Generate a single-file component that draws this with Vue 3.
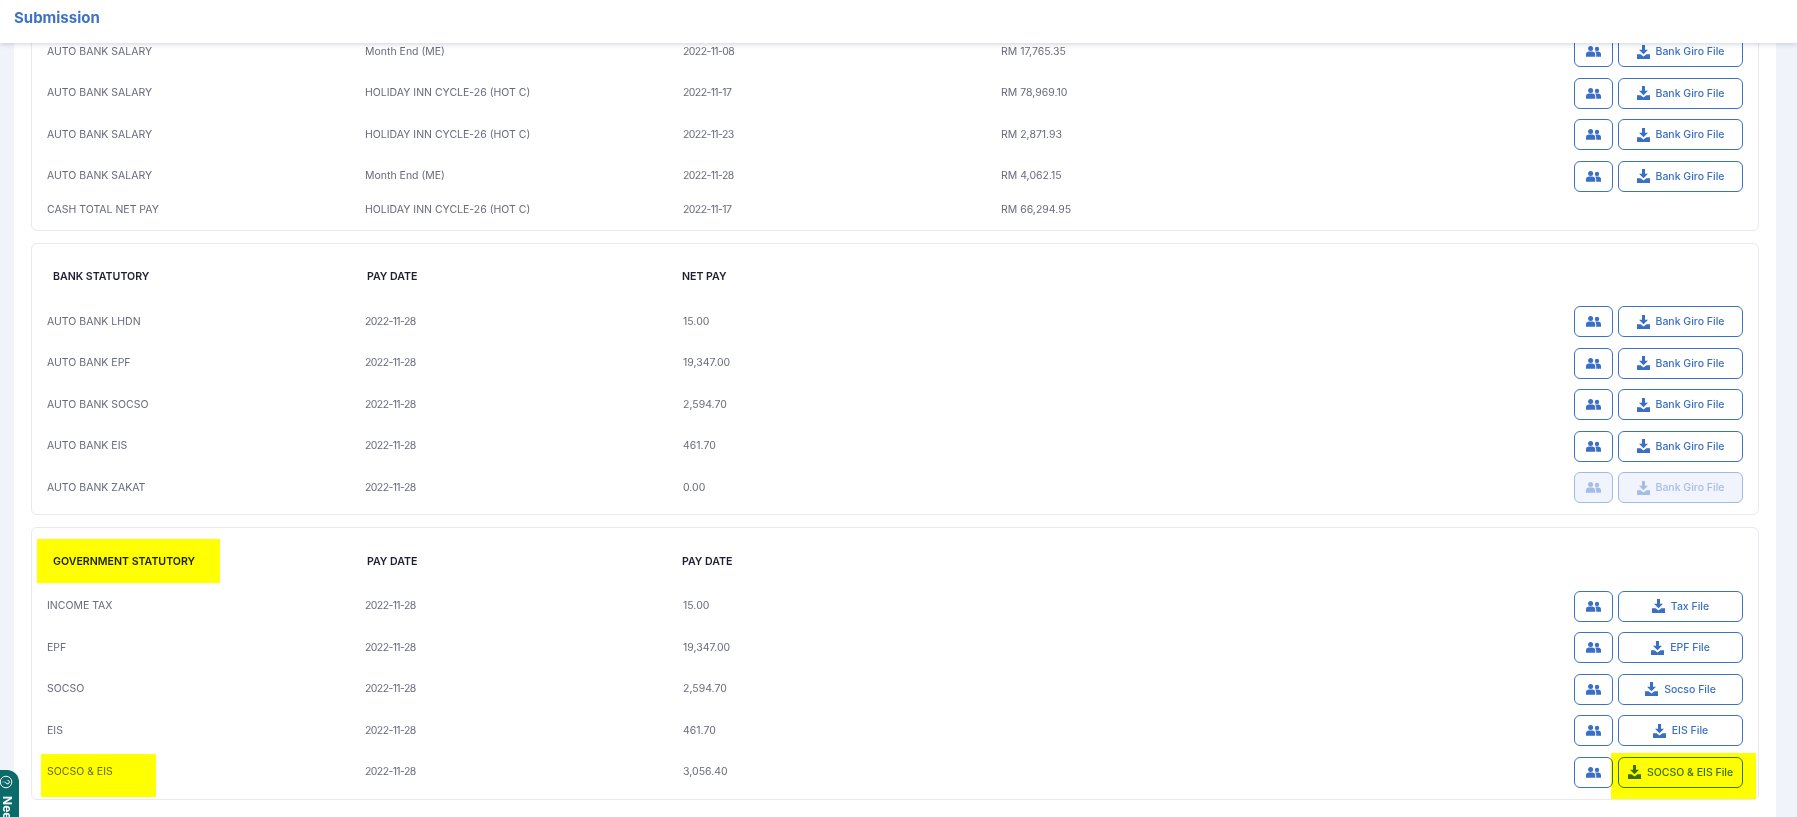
<template>
  <div class="page">
    <header class="topbar">Submission</header>

    <main class="content">
      <section v-for="section in sections" :key="section.id" class="card" :class="section.id">
        <div v-if="section.heading" class="head-row">
          <div class="head-cell">
            {{ section.heading }}
            <span v-if="section.marked" class="marker marker-head"></span>
          </div>
          <div class="head-cell">PAY DATE</div>
          <div class="head-cell">{{ section.amountHeading }}</div>
        </div>

        <div
          v-for="row in section.rows"
          :key="row.name + row.date + row.cycle"
          class="row"
          :class="{ short: row.noActions }"
        >
          <div class="cell">
            {{ row.name }}
            <span v-if="row.marked" class="marker marker-name"></span>
          </div>
          <div class="cell" :class="{ date: !row.cycle }">{{ row.cycle || row.date }}</div>
          <div class="cell" :class="{ date: row.cycle }">{{ row.cycle ? row.date : row.amount }}</div>
          <div class="cell">{{ row.cycle ? row.amount : '' }}</div>

          <div v-if="!row.noActions" class="actions">
            <button class="btn btn-icon" :disabled="row.disabled">
              <svg width="15" height="11" viewBox="0 0 15 11" fill="currentColor">
                <circle cx="4.6" cy="2.6" r="2.5" />
                <circle cx="11" cy="2.9" r="2.2" />
                <path d="M0 10.8V8.3C0 6.6 1.4 5.6 3 5.6h3.2c1.6 0 3 1 3 2.7v2.5z" />
                <path d="M10.2 10.8V8.2c0-1-.4-1.8-1-2.5.4-.1.8-.1 1.2-.1h1.5c1.7 0 3.1 1 3.1 2.6v2.6z" />
              </svg>
            </button>
            <button class="btn btn-file" :disabled="row.disabled">
              <svg width="13" height="14" viewBox="0 0 13 14" fill="currentColor">
                <path d="M5 0h3v4.8h3L6.5 9.3 2 4.8h3z" />
                <path d="M0 9.2h3.6l2.9 2.3 2.9-2.3H13V14H0z" />
              </svg>
              {{ row.file || 'Bank Giro File' }}
            </button>
            <span v-if="row.marked" class="marker marker-btn"></span>
          </div>
        </div>
      </section>
    </main>

    <div class="help-tab">
      <svg width="14" height="14" viewBox="0 0 14 14" fill="none" stroke="#fff" stroke-width="1">
        <circle cx="7" cy="7" r="5.8" />
        <path d="M5.3 5.5a1.8 1.8 0 1 1 2.7 1.5c-.7.4-1 .8-1 1.5M7 9.6v.8" transform="rotate(90 7 7)" />
      </svg>
      <span>Need Help</span>
    </div>
  </div>
</template>

<script setup>
const sections = [
  {
    id: 'salary',
    rows: [
      { name: 'AUTO BANK SALARY', cycle: 'Month End (ME)', date: '2022-11-08', amount: 'RM 17,765.35' },
      { name: 'AUTO BANK SALARY', cycle: 'HOLIDAY INN CYCLE-26 (HOT C)', date: '2022-11-17', amount: 'RM 78,969.10' },
      { name: 'AUTO BANK SALARY', cycle: 'HOLIDAY INN CYCLE-26 (HOT C)', date: '2022-11-23', amount: 'RM 2,871.93' },
      { name: 'AUTO BANK SALARY', cycle: 'Month End (ME)', date: '2022-11-28', amount: 'RM 4,062.15' },
      { name: 'CASH TOTAL NET PAY', cycle: 'HOLIDAY INN CYCLE-26 (HOT C)', date: '2022-11-17', amount: 'RM 66,294.95', noActions: true }
    ]
  },
  {
    id: 'bank',
    heading: 'BANK STATUTORY',
    amountHeading: 'NET PAY',
    rows: [
      { name: 'AUTO BANK LHDN', date: '2022-11-28', amount: '15.00' },
      { name: 'AUTO BANK EPF', date: '2022-11-28', amount: '19,347.00' },
      { name: 'AUTO BANK SOCSO', date: '2022-11-28', amount: '2,594.70' },
      { name: 'AUTO BANK EIS', date: '2022-11-28', amount: '461.70' },
      { name: 'AUTO BANK ZAKAT', date: '2022-11-28', amount: '0.00', disabled: true }
    ]
  },
  {
    id: 'gov',
    heading: 'GOVERNMENT STATUTORY',
    amountHeading: 'PAY DATE',
    marked: true,
    rows: [
      { name: 'INCOME TAX', date: '2022-11-28', amount: '15.00', file: 'Tax File' },
      { name: 'EPF', date: '2022-11-28', amount: '19,347.00', file: 'EPF File' },
      { name: 'SOCSO', date: '2022-11-28', amount: '2,594.70', file: 'Socso File' },
      { name: 'EIS', date: '2022-11-28', amount: '461.70', file: 'EIS File' },
      { name: 'SOCSO & EIS', date: '2022-11-28', amount: '3,056.40', file: 'SOCSO & EIS File', marked: true }
    ]
  }
]
</script>

<style scoped>
.page {
  position: relative;
  height: 817px;
  overflow: hidden;
  background: #f0f3f9;
  font-family: Inter, "Liberation Sans", sans-serif;
}

.topbar {
  position: relative;
  z-index: 5;
  height: 43px;
  padding: 8px 14px 0;
  box-sizing: border-box;
  background: #fff;
  box-shadow: 0 1px 5px rgba(40, 50, 80, 0.22);
  color: #3f72c4;
  font-size: 15px;
  font-weight: 700;
  line-height: 19px;
}

.content {
  display: flex;
  flex-direction: column;
  gap: 12px;
  height: 774px;
  margin: 0 21px 0 14px;
  padding: 0 17px;
  background: #fff;
}

.card {
  flex: none;
  padding-bottom: 6px;
  border: 1px solid #e8e9ee;
  border-radius: 6px;
  background: #fff;
}

.card.salary {
  margin-top: -13.25px;
  padding-bottom: 7px;
}

.head-row {
  display: grid;
  grid-template-columns: 330px 315px 1fr;
  padding: 11px 0 2px 5px;
}

.head-cell {
  position: relative;
  display: flex;
  align-items: center;
  height: 44px;
  padding-left: 16px;
  color: #1d2030;
  font-size: 10.6px;
  font-weight: 600;
}

.head-cell + .head-cell {
  padding-left: 0;
}

.row {
  display: grid;
  grid-template-columns: 318px 318px 318px 1fr auto;
  align-items: center;
  height: 41.5px;
  padding: 0 15px;
}

.row.short {
  height: 26px;
}

.cell {
  position: relative;
  color: #676b7b;
  font-size: 10.5px;
  line-height: 14px;
  white-space: nowrap;
}

.cell.date {
  letter-spacing: -0.6px;
}

.actions {
  position: relative;
  display: flex;
  gap: 5px;
}

.btn {
  display: flex;
  align-items: center;
  justify-content: center;
  height: 31px;
  padding: 0;
  border: 1px solid #3a72c6;
  border-radius: 6px;
  background: #fff;
  color: #3a6fc4;
  font-family: inherit;
  font-size: 10.5px;
  font-weight: 500;
}

.btn:disabled {
  border-color: #9dbbe6;
  background: #f1f4fc;
  color: #a3bde6;
}

.btn-icon {
  width: 39px;
}

.btn-file {
  gap: 6px;
  width: 125px;
}

.marker {
  position: absolute;
  background: #ff0;
  mix-blend-mode: multiply;
  pointer-events: none;
}

.marker-head {
  inset: 0;
  width: 183px;
}

.marker-name {
  top: -11px;
  left: -6px;
  width: 115px;
  height: 43px;
}

.marker-btn {
  top: -3.5px;
  left: 37px;
  width: 145px;
  height: 46px;
}

.help-tab {
  position: absolute;
  z-index: 6;
  top: 770px;
  left: 0;
  display: flex;
  flex-direction: column;
  align-items: center;
  gap: 7px;
  width: 19px;
  height: 90px;
  overflow: hidden;
  padding-top: 5px;
  box-sizing: border-box;
  border-radius: 0 12px 0 0;
  background: #0b6a6a;
  color: #fff;
  font-size: 12px;
  font-weight: 700;
}

.help-tab svg {
  flex: none;
  margin-left: -8px;
}

.help-tab span {
  writing-mode: vertical-rl;
  margin-left: -5px;
  white-space: nowrap;
}
</style>
